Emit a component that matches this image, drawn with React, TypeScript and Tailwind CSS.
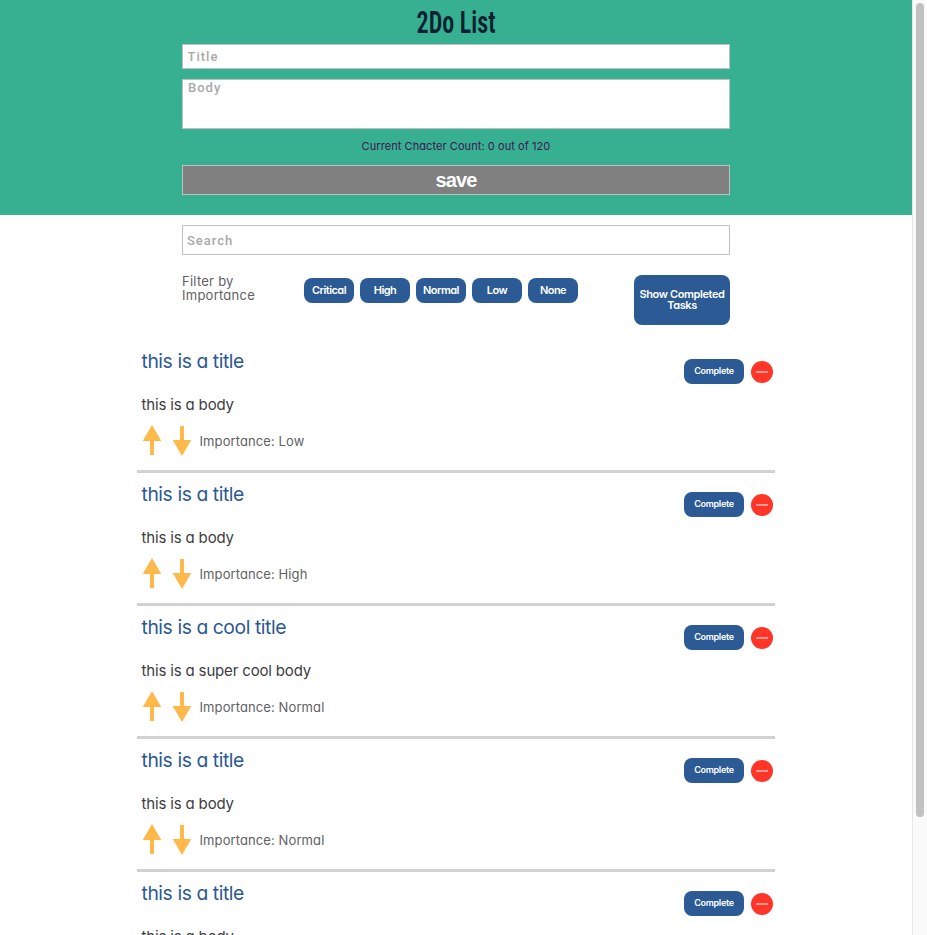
import React from "react";

type Task = { title: string; body: string; importance: string };

const tasks: Task[] = [
  { title: "this is a title", body: "this is a body", importance: "Low" },
  { title: "this is a title", body: "this is a body", importance: "High" },
  { title: "this is a cool title", body: "this is a super cool body", importance: "Normal" },
  { title: "this is a title", body: "this is a body", importance: "Normal" },
  { title: "this is a title", body: "this is a body", importance: "Normal" },
];

const filters = ["Critical", "High", "Normal", "Low", "None"];

const field =
  "block w-full resize-none rounded-none border border-[#bfc0c2] bg-white font-['Roboto',sans-serif] text-[13px] font-medium tracking-[1px] outline-none placeholder:text-[#a9a9a9] placeholder:opacity-100";

function Arrow({ down = false }: { down?: boolean }) {
  return (
    <svg width="20" height="30" viewBox="0 0 20 30" className={down ? "mt-px rotate-180" : ""}>
      <path d="M10 0 L19.3 16 H12 V30 H8 V16 H0.7 Z" fill="#feb94a" />
    </svg>
  );
}

function TaskCard({ task }: { task: Task }) {
  return (
    <article className="flex h-[133px] justify-between border-b-[3px] border-[#d1d1d3] pl-[5px] pr-[2px]">
      <div>
        <h2 className="-ml-[0.5px] mt-[9px] h-6 text-[19.3px] leading-6 tracking-[-0.42px] text-[#2a5894]">{task.title}</h2>
        <p className="-ml-[0.5px] mt-[22px] h-5 text-[15px] leading-5 tracking-[-0.16px] text-[#3d3d40]">{task.body}</p>
        <div className="mt-[10px] flex h-8 items-start">
          <Arrow />
          <div className="ml-[10px] flex">
            <Arrow down />
          </div>
          <p className="ml-[7.5px] mt-[6px] text-[13px] leading-5 tracking-[0.1px] text-[#5f6165]">
            Importance: {task.importance}
          </p>
        </div>
      </div>
      <div className="flex items-start gap-[7px]">
        <button className="mt-[19px] h-[25px] w-[60px] rounded-[8px] bg-[#2b5a95] pb-px text-[9px] font-semibold tracking-[-0.3px] text-white">
          Complete
        </button>
        <button className="mt-[21px] flex size-[22px] items-center justify-center rounded-full bg-[#ff3627]" aria-label="Delete">
          <span className="h-[2px] w-3 bg-[#ff988f]" />
        </button>
      </div>
    </article>
  );
}

export default function App() {
  return (
    <div className="flex h-[935px] w-[927px] overflow-hidden bg-white font-['Inter',sans-serif] [font-feature-settings:'cv11']">
      <div className="w-[912px] shrink-0">
        <header className="flex h-[215px] flex-col items-center bg-[#37af91]">
          <h1 className="h-11 origin-center scale-x-[0.79] whitespace-nowrap pt-[2px] font-['Roboto_Condensed',sans-serif] text-[30.5px] font-semibold leading-[41px] text-[#0b1f32]">
            2Do List
          </h1>
          <div className="w-[548px]">
            <input className={`${field} h-[25px] px-[4.5px]`} placeholder="Title" />
            <textarea className={`${field} mt-[10px] h-[50px] px-[5px] py-0 leading-[16px]`} placeholder="Body" />
            <p className="mt-[9px] h-4 text-center text-[11px] leading-4 tracking-[0.07px] text-[#3d1754]">
              Current Chacter Count: 0 out of 120
            </p>
            <button className="mt-[11px] h-[30px] w-full border border-[#bfc0c2] bg-[#808080] font-['Liberation_Sans',sans-serif] text-[20px] font-bold leading-7 tracking-[-0.9px] text-white">
              save
            </button>
          </div>
        </header>
        <section className="mx-auto h-[125px] w-[548px] pt-[10px]">
          <input className={`${field} h-[30px] px-[4px]`} placeholder="Search" />
          <div className="mt-5 flex items-start">
            <p className="-mt-px w-[122px] text-[13px] leading-[14px] tracking-[0.25px] text-[#5f6165]">
              Filter by
              <br />
              Importance
            </p>
            <div className="mt-[3px] flex gap-[6px]">
              {filters.map((f) => (
                <button key={f} className="h-[25px] w-[50px] rounded-[8px] bg-[#2b5a95] text-[11px] font-semibold tracking-[-0.55px] text-white">
                  {f}
                </button>
              ))}
            </div>
            <button className="ml-auto h-[50px] w-[96px] rounded-[8px] bg-[#2b5a95] text-[11px] font-semibold leading-[11px] tracking-[-0.4px] text-white">
              Show Completed Tasks
            </button>
          </div>
        </section>
        <main className="mx-auto w-[638px]">
          {tasks.map((task, i) => (
            <TaskCard key={i} task={task} />
          ))}
        </main>
      </div>
      <div className="flex w-[15px] justify-center border-l border-[#e7e7e7] bg-[#fafafa] pt-[3px]">
        <div className="h-[814px] w-2 rounded-full bg-[#c1c1c1]" />
      </div>
    </div>
  );
}
